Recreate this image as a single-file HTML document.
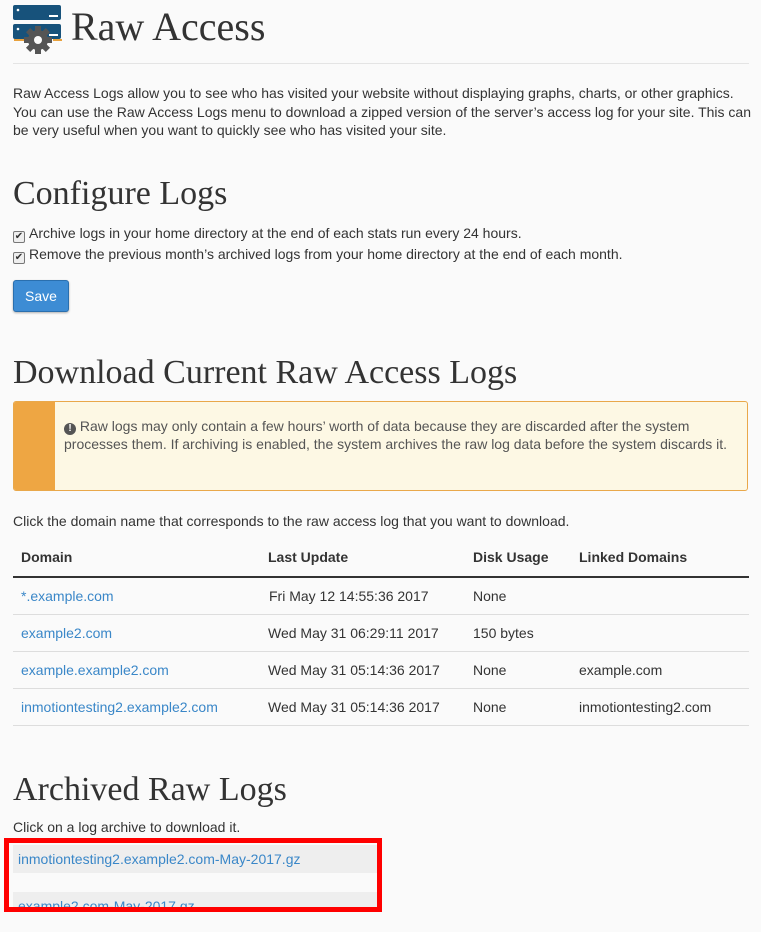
<!DOCTYPE html>
<html><head><style>
body{margin:0;background:#fafafa;font-family:"Liberation Sans",sans-serif;font-size:14px;color:#333;width:761px;height:932px;overflow:hidden;position:relative}
.a{position:absolute;white-space:nowrap}
h{position:absolute;font-family:"Liberation Serif",serif;color:#333;white-space:nowrap}
a{color:#3a87c8;text-decoration:none}
.cb{display:inline-block;width:10px;height:10px;border:1px solid #777;border-radius:2px;background:#eee;vertical-align:-1px;margin-right:4px;font-size:10px;line-height:10px;text-align:center}
</style></head><body>
<svg class="a" style="left:13px;top:5px" width="50" height="49" viewBox="0 0 50 49">
<rect x="0" y="0" width="48" height="15" rx="2" fill="#17527b"/>
<rect x="0" y="19" width="48" height="15" rx="2" fill="#17527b"/>
<circle cx="5" cy="5" r="1.3" fill="#fff"/><circle cx="5" cy="24" r="1.3" fill="#fff"/>
<rect x="36" y="10" width="9" height="2" fill="#fff"/><rect x="36" y="29" width="9" height="2" fill="#fff"/>
<rect x="1" y="34" width="10" height="2" fill="#e8a13c"/><rect x="40" y="34" width="9" height="2" fill="#e8a13c"/>
<g transform="translate(25,35)" fill="#555">
<circle r="10"/>
<rect x="-3" y="-14" width="6" height="28"/><rect x="-14" y="-3" width="28" height="6"/>
<rect x="-3" y="-14" width="6" height="28" transform="rotate(45)"/><rect x="-3" y="-14" width="6" height="28" transform="rotate(-45)"/>
<circle r="4" fill="#fafafa"/></g>
</svg>
<h style="left:71px;top:3px;font-size:40px">Raw Access</h>
<div class="a" style="left:13px;top:63px;width:736px;height:1px;background:#e4e4e4"></div>
<div class="a" style="left:13px;top:84px;line-height:18.5px;white-space:normal;width:745px">Raw Access Logs allow you to see who has visited your website without displaying graphs, charts, or other graphics. You can use the Raw Access Logs menu to download a zipped version of the server’s access log for your site. This can be very useful when you want to quickly see who has visited your site.</div>
<h style="left:13px;top:175px;font-size:34px">Configure Logs</h>
<div class="a" style="left:13px;top:225px"><span class="cb">✔</span>Archive logs in your home directory at the end of each stats run every 24 hours.</div>
<div class="a" style="left:13px;top:246px"><span class="cb">✔</span>Remove the previous month’s archived logs from your home directory at the end of each month.</div>
<div class="a" style="left:13px;top:280px;width:56px;height:32px;background:#3d8cd4;border:1px solid #2a6fae;border-radius:3px;color:#fff;text-align:center;line-height:30px;box-sizing:border-box;box-shadow:0 1px 2px rgba(0,0,0,.3)">Save</div>
<h style="left:13px;top:354px;font-size:34px">Download Current Raw Access Logs</h>
<div class="a" style="left:13px;top:401px;width:735px;height:90px;background:#fdf8e4;border:1px solid #e9a84a;box-sizing:border-box;border-radius:3px;overflow:hidden">
<div style="position:absolute;left:0;top:0;width:41px;height:100%;background:#eea643"></div>
<div style="position:absolute;left:50px;top:15px;width:670px;white-space:normal;line-height:18px;color:#555"><span style="display:inline-block;width:12px;height:12px;border-radius:50%;background:#555;color:#fff;font-size:10px;line-height:12px;text-align:center;font-weight:bold;vertical-align:0">!</span> Raw logs may only contain a few hours’ worth of data because they are discarded after the system processes them. If archiving is enabled, the system archives the raw log data before the system discards it.</div></div>
<div class="a" style="left:13px;top:513px">Click the domain name that corresponds to the raw access log that you want to download.</div>
<div class="a" style="left:13px;top:540px;width:736px">
<div style="position:relative;height:36px;border-bottom:2px solid #333;font-weight:bold">
<span class="a" style="left:8px;top:9px">Domain</span><span class="a" style="left:255px;top:9px">Last Update</span><span class="a" style="left:460px;top:9px">Disk Usage</span><span class="a" style="left:566px;top:9px">Linked Domains</span></div>
<div style="position:relative;height:36px;border-bottom:1px solid #ddd"><a class="a" style="left:8px;top:10px">*.example.com</a><span class="a" style="left:256px;top:10px">Fri May 12 14:55:36 2017</span><span class="a" style="left:460px;top:10px">None</span></div>
<div style="position:relative;height:36px;border-bottom:1px solid #ddd"><a class="a" style="left:8px;top:10px">example2.com</a><span class="a" style="left:255px;top:10px">Wed May 31 06:29:11 2017</span><span class="a" style="left:460px;top:10px">150 bytes</span></div>
<div style="position:relative;height:36px;border-bottom:1px solid #ddd"><a class="a" style="left:8px;top:10px">example.example2.com</a><span class="a" style="left:255px;top:10px">Wed May 31 05:14:36 2017</span><span class="a" style="left:460px;top:10px">None</span><span class="a" style="left:566px;top:10px">example.com</span></div>
<div style="position:relative;height:36px;border-bottom:1px solid #ddd"><a class="a" style="left:8px;top:10px">inmotiontesting2.example2.com</a><span class="a" style="left:255px;top:10px">Wed May 31 05:14:36 2017</span><span class="a" style="left:460px;top:10px">None</span><span class="a" style="left:566px;top:10px">inmotiontesting2.com</span></div>
</div>
<h style="left:13px;top:771px;font-size:34px">Archived Raw Logs</h>
<div class="a" style="left:13px;top:819px">Click on a log archive to download it.</div>
<div class="a" style="left:13px;top:845px;width:367px;height:28px;background:#eee"><a class="a" style="left:5px;top:6px">inmotiontesting2.example2.com-May-2017.gz</a></div>
<div class="a" style="left:13px;top:892px;width:367px;height:28px;background:#eee;overflow:hidden"><a class="a" style="left:5px;top:6px">example2.com-May-2017.gz</a></div>
<div class="a" style="left:4px;top:838px;width:378px;height:74px;border:5px solid #f00;box-sizing:border-box"></div>
<div class="a" style="left:13px;top:912px;width:367px;height:20px;background:#fafafa"></div>
</body></html>
